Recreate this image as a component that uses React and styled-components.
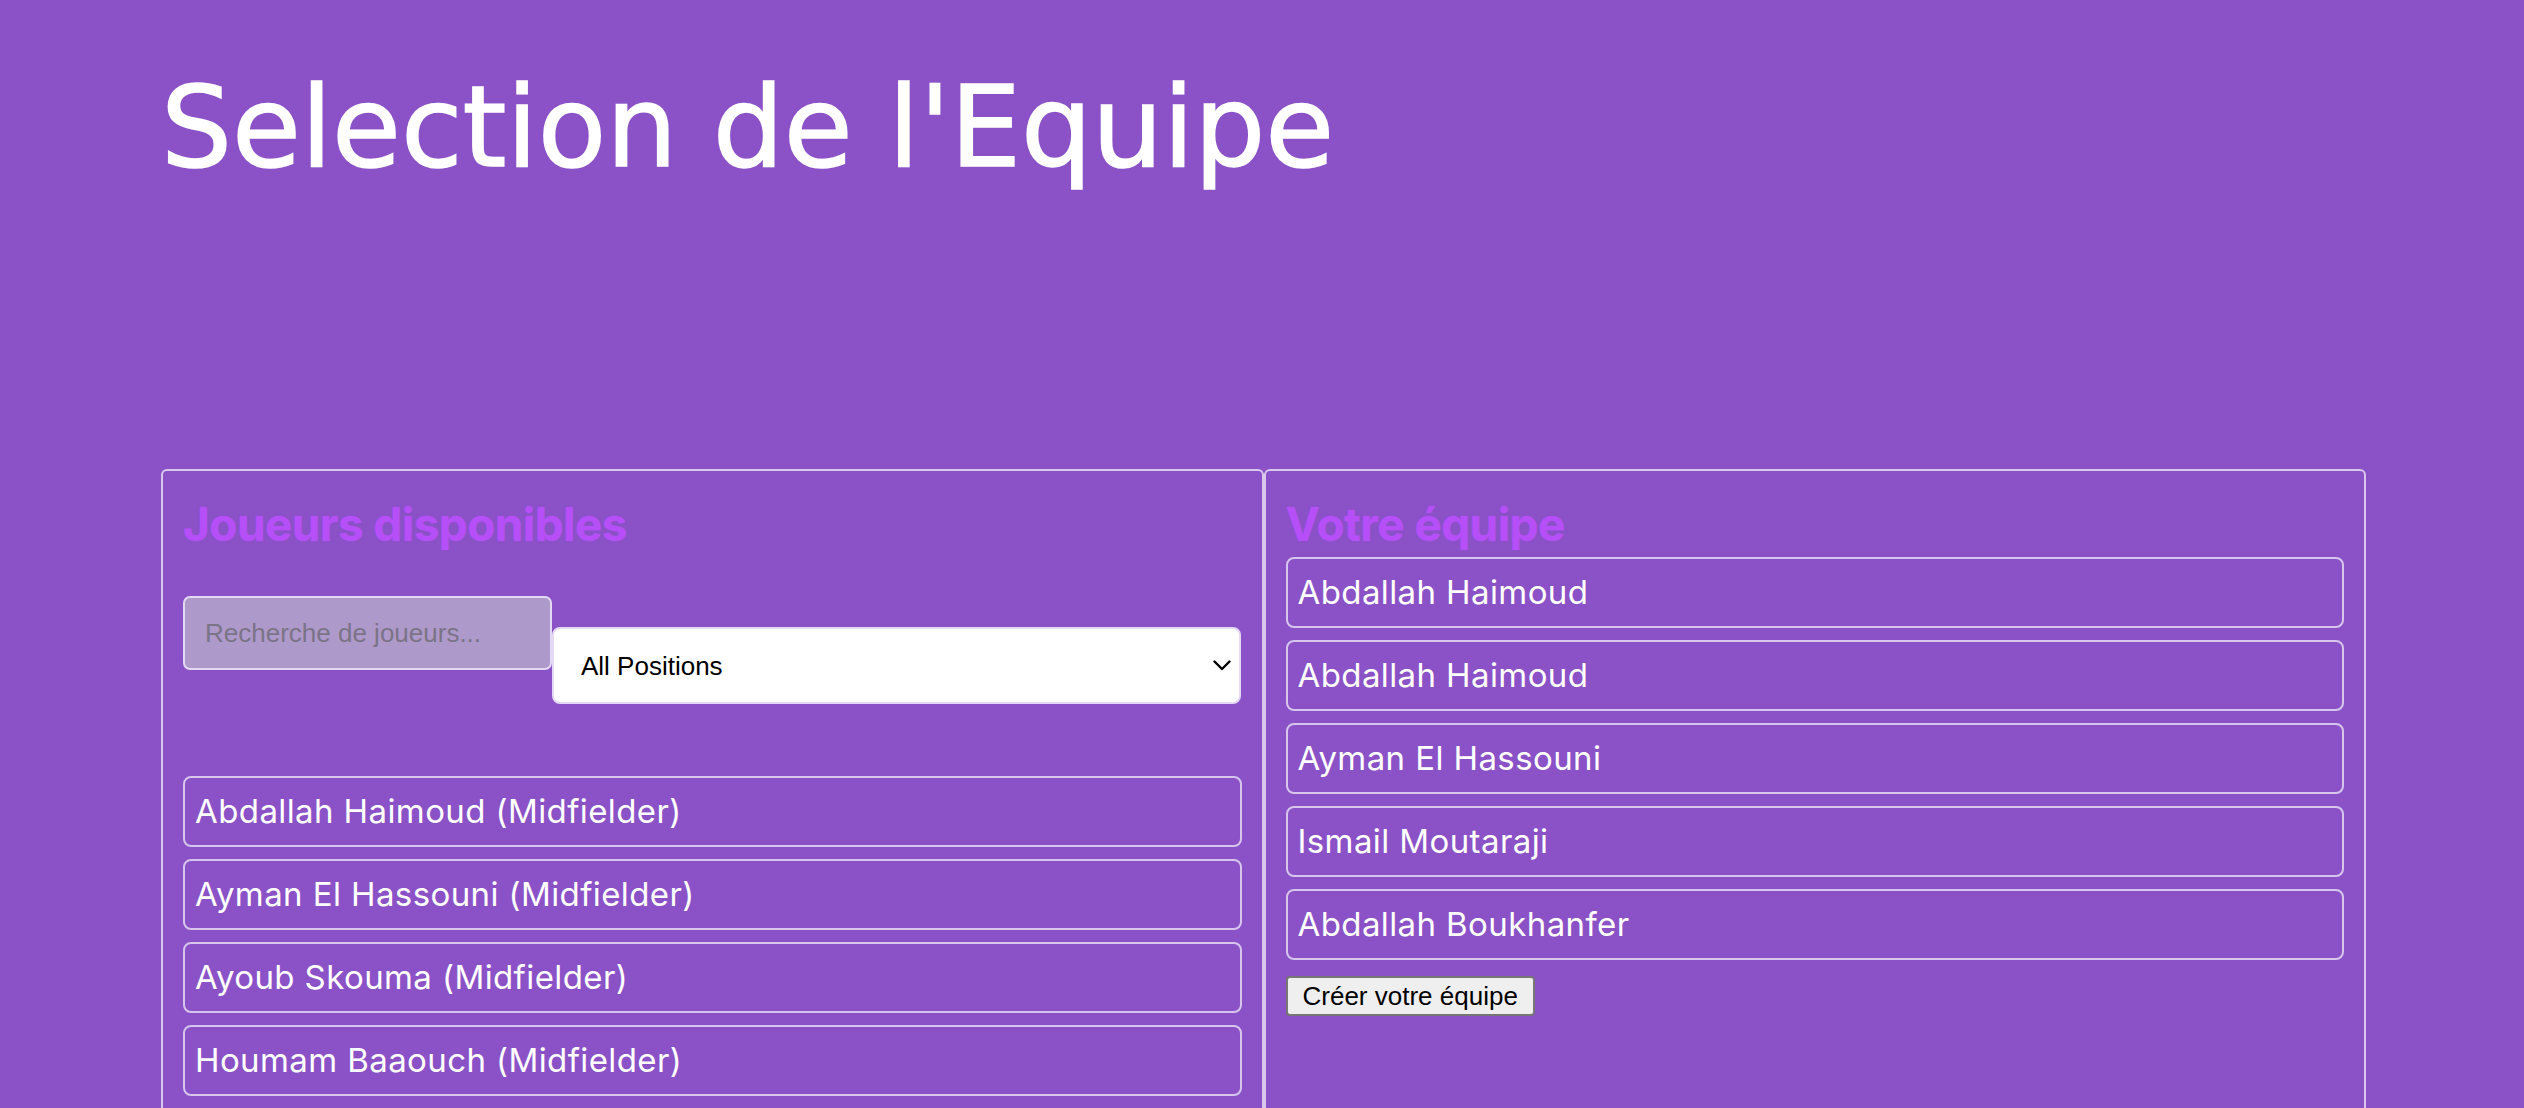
import React from "react";
import styled, { createGlobalStyle } from "styled-components";

const GlobalStyle = createGlobalStyle`
  html, body {
    margin: 0;
    padding: 0;
    background: #8a52c6;
  }
  body {
    font-family: Inter, "Noto Sans", sans-serif;
    overflow: hidden;
  }
  * { box-sizing: border-box; }
`;

const Page = styled.div`
  min-height: 1108px;
  background: #8a52c6;
  padding: 60px 158px 0 161px;
`;

const Title = styled.h1`
  margin: 0 0 275px 0;
  font-family: "DejaVu Sans", sans-serif;
  font-weight: 500;
  font-size: 112px;
  line-height: 134px;
  color: #ffffff;
  -webkit-text-stroke: 1.5px #ffffff;
`;

const Columns = styled.div`
  display: grid;
  grid-template-columns: 1fr 1fr;
`;

const Panel = styled.section`
  border: 2px solid #d9c8ee;
  border-radius: 6px;
  padding: 21px 20px;
  min-height: 900px;
`;

const PanelTitle = styled.h2`
  margin: 0;
  font-family: Inter, sans-serif;
  font-weight: 700;
  font-size: 46px;
  line-height: 65px;
  letter-spacing: -0.6px;
  color: #b64ff8;
  text-shadow: 0 0 2px rgba(182, 79, 248, 0.5);
`;

const SearchRow = styled.div`
  display: flex;
  align-items: flex-start;
  margin-top: 39px;
`;

const SearchInput = styled.input`
  width: 369px;
  height: 74px;
  border: 2px solid #e4d9f2;
  border-radius: 7px;
  background: #ae99cb;
  padding: 0 20px;
  font-family: "Liberation Sans", Arial, sans-serif;
  font-size: 26px;
  color: #333;
  outline: none;
  &::placeholder {
    color: #7b7486;
  }
`;

const SelectWrap = styled.div`
  position: relative;
  margin-top: 31px;
  width: 689px;
  height: 77px;
`;

const Select = styled.select`
  appearance: none;
  width: 100%;
  height: 100%;
  border: 2px solid #e4d9f2;
  border-radius: 8px;
  background: #ffffff;
  padding: 0 27px;
  font-family: "Liberation Sans", Arial, sans-serif;
  font-size: 26px;
  color: #000;
  outline: none;
`;

const Chevron = styled.svg`
  position: absolute;
  right: 10px;
  top: 33px;
  width: 18px;
  height: 11px;
  pointer-events: none;
`;

const List = styled.div`
  display: flex;
  flex-direction: column;
  gap: 12px;
  margin-top: ${(p) => p.$offset}px;
`;

const Item = styled.div`
  border: 2px solid #d6c5ec;
  border-radius: 8px;
  padding: 12px 10px;
  font-family: Inter, sans-serif;
  font-size: 33px;
  line-height: 43px;
  letter-spacing: 0.4px;
  color: #ffffff;
`;

const CreateButton = styled.button`
  margin-top: 16px;
  height: 40px;
  padding: 0 15px;
  background: #efefef;
  border: 2px solid #767676;
  border-radius: 4px;
  font-family: "Liberation Sans", Arial, sans-serif;
  font-size: 26px;
  color: #000;
`;

const available = [
  "Abdallah Haimoud (Midfielder)",
  "Ayman El Hassouni (Midfielder)",
  "Ayoub Skouma (Midfielder)",
  "Houmam Baaouch (Midfielder)",
  "Ismail Moutaraji (Forward)",
  "Abdallah Boukhanfer (Defender)",
];

const team = [
  "Abdallah Haimoud",
  "Abdallah Haimoud",
  "Ayman El Hassouni",
  "Ismail Moutaraji",
  "Abdallah Boukhanfer",
];

export default function App() {
  return (
    <>
      <GlobalStyle />
      <Page>
        <Title>Selection de l'Equipe</Title>
        <Columns>
          <Panel>
            <PanelTitle>Joueurs disponibles</PanelTitle>
            <SearchRow>
              <SearchInput placeholder="Recherche de joueurs..." />
              <SelectWrap>
                <Select defaultValue="all">
                  <option value="all">All Positions</option>
                  <option value="gk">Goalkeeper</option>
                  <option value="df">Defender</option>
                  <option value="mf">Midfielder</option>
                  <option value="fw">Forward</option>
                </Select>
                <Chevron viewBox="0 0 18 11" fill="none">
                  <path d="M1.5 1.5 L9 9 L16.5 1.5" stroke="#000" strokeWidth="2.4" strokeLinecap="round" strokeLinejoin="round" />
                </Chevron>
              </SelectWrap>
            </SearchRow>
            <List $offset={72}>
              {available.map((p, i) => (
                <Item key={i}>{p}</Item>
              ))}
            </List>
          </Panel>
          <Panel>
            <PanelTitle>Votre équipe</PanelTitle>
            <List $offset={0}>
              {team.map((p, i) => (
                <Item key={i}>{p}</Item>
              ))}
            </List>
            <CreateButton>Créer votre équipe</CreateButton>
          </Panel>
        </Columns>
      </Page>
    </>
  );
}
